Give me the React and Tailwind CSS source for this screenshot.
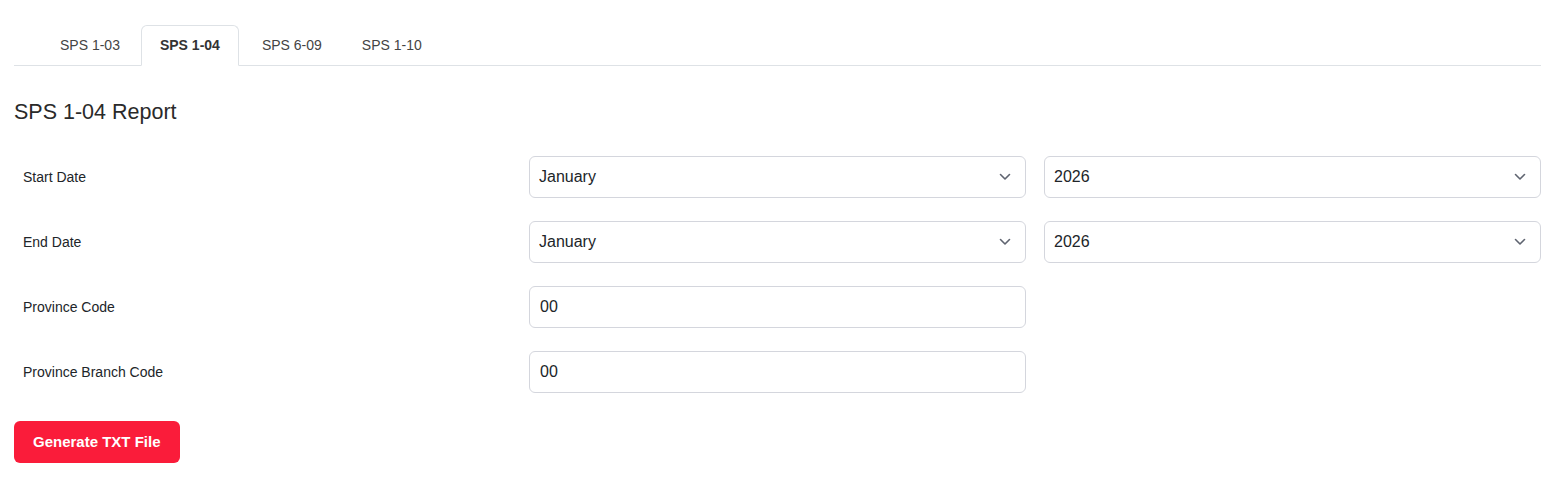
import { useState } from 'react';

const tabs = ['SPS 1-03', 'SPS 1-04', 'SPS 6-09', 'SPS 1-10'];
const months = [
  'January', 'February', 'March', 'April', 'May', 'June',
  'July', 'August', 'September', 'October', 'November', 'December',
];
const years = ['2024', '2025', '2026', '2027'];

function Chevron() {
  return (
    <svg
      className="pointer-events-none absolute right-[15px] top-1/2 -translate-y-1/2 text-[#5f6470]"
      width="12"
      height="8"
      viewBox="0 0 12 8"
      fill="none"
    >
      <path d="M1.5 1.5 6 6l4.5-4.5" stroke="currentColor" strokeWidth="1.6" strokeLinecap="round" strokeLinejoin="round" />
    </svg>
  );
}

function Select({ value, options }) {
  const [val, setVal] = useState(value);
  return (
    <div className="relative">
      <select
        value={val}
        onChange={(e) => setVal(e.target.value)}
        className="h-[42px] w-full appearance-none rounded-md border border-[#d4d6dd] bg-white pl-[9px] pr-10 text-[16px] text-[#212529] outline-none"
      >
        {options.map((o) => (
          <option key={o}>{o}</option>
        ))}
      </select>
      <Chevron />
    </div>
  );
}

function TextInput({ value }) {
  const [val, setVal] = useState(value);
  return (
    <input
      value={val}
      onChange={(e) => setVal(e.target.value)}
      className="h-[42px] w-full rounded-md border border-[#d4d6dd] bg-white px-[10px] text-[16px] text-[#212529] outline-none"
    />
  );
}

function Row({ label, children }) {
  return (
    <div className="grid grid-cols-3 items-center gap-[18px]">
      <div className="pl-[9px] text-[14px] text-[#212529]">{label}</div>
      {children}
    </div>
  );
}

export default function App() {
  const [active, setActive] = useState('SPS 1-04');

  return (
    <div className="min-h-screen bg-white pl-[14px] pr-[19px] pt-[25px] text-[#212529]" style={{ fontFamily: '"Liberation Sans", Arial, sans-serif' }}>
      <div className="flex border-b border-[#dee2e6] pl-[26px]">
        {tabs.map((t) => (
          <button
            key={t}
            onClick={() => setActive(t)}
            className={
              t === active
                ? '-mb-px ml-px mr-[3px] h-[41px] rounded-t-md border border-[#dee2e6] border-b-white bg-white px-[18px] text-[14px] font-bold text-[#333]'
                : '-mb-px h-[41px] border border-transparent px-[19px] text-[14px] text-[#444]'
            }
          >
            {t}
          </button>
        ))}
      </div>

      <h2 className="mt-[33px] text-[21.5px] font-normal leading-[26px] text-[#2a2a2a]">SPS 1-04 Report</h2>

      <div className="mt-[31px] flex flex-col gap-[23px]">
        <Row label="Start Date">
          <Select value="January" options={months} />
          <Select value="2026" options={years} />
        </Row>
        <Row label="End Date">
          <Select value="January" options={months} />
          <Select value="2026" options={years} />
        </Row>
        <Row label="Province Code">
          <TextInput value="00" />
        </Row>
        <Row label="Province Branch Code">
          <TextInput value="00" />
        </Row>
      </div>

      <button className="mt-[28px] h-[42px] rounded-md bg-[#fa1c3a] px-[19px] text-[15px] font-bold text-white">
        Generate TXT File
      </button>
    </div>
  );
}
